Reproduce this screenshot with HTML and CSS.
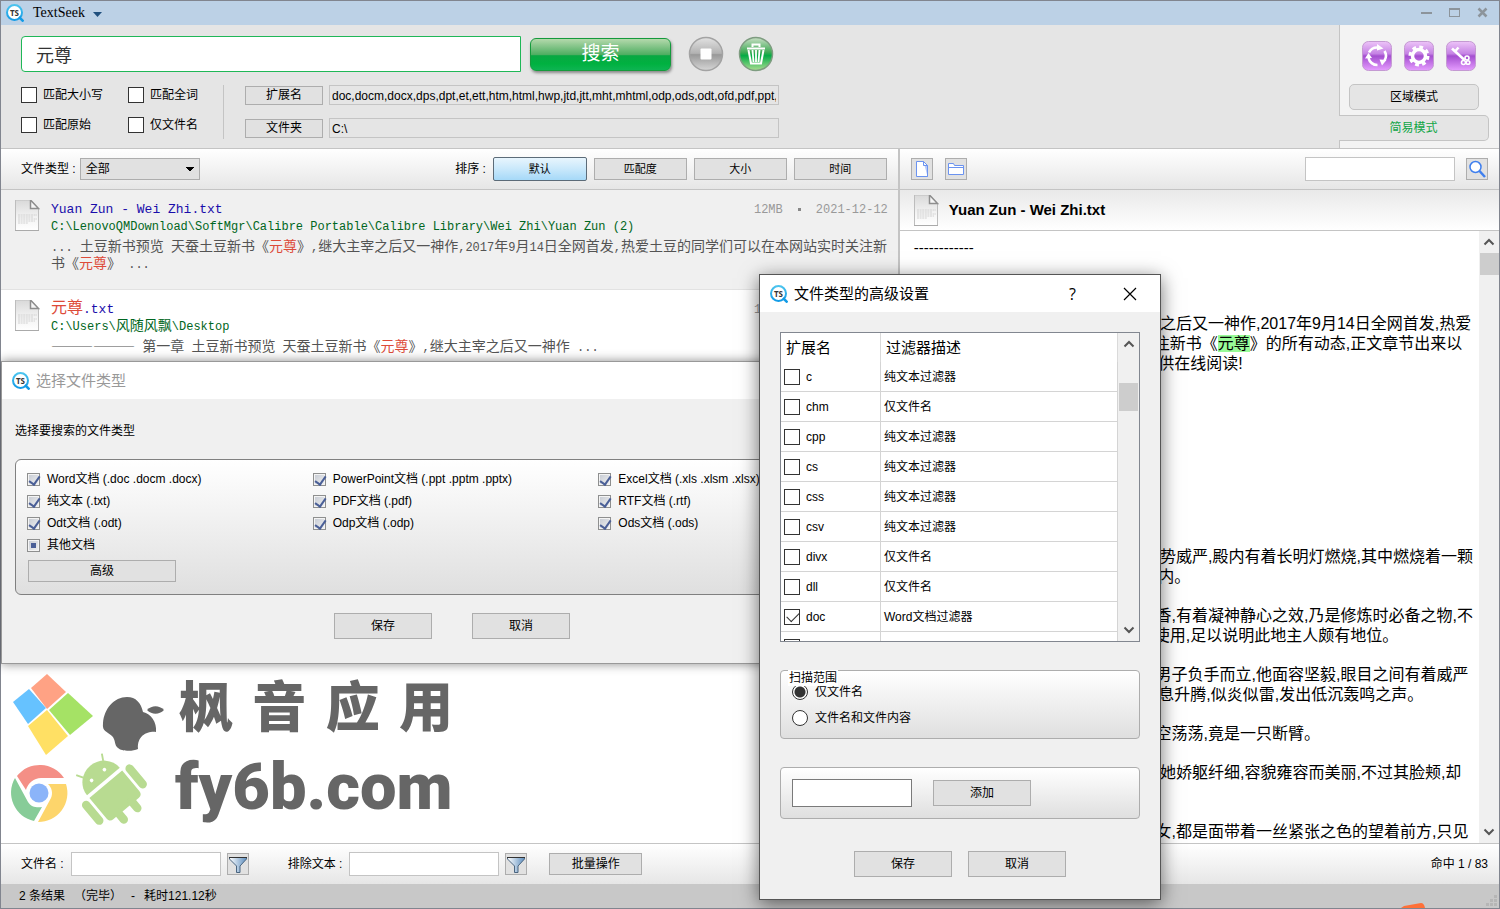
FILE: index.html
```html
<!DOCTYPE html>
<html lang="zh-CN">
<head>
<meta charset="utf-8">
<title>TextSeek</title>
<link rel="stylesheet" href="styles.css">
</head>
<body>
<svg class="defs" aria-hidden="true">
  <defs>
    <linearGradient id="blueRing" x1="0" y1="0" x2="0" y2="1"><stop offset="0" stop-color="#4cc4ee"/><stop offset="1" stop-color="#129be6"/></linearGradient>
    <linearGradient id="violet" x1="0" y1="0" x2="0" y2="1"><stop offset="0" stop-color="#edc4f8"/><stop offset=".42" stop-color="#c583e4"/><stop offset=".5" stop-color="#a44fd0"/><stop offset="1" stop-color="#e69dff"/></linearGradient>
    <linearGradient id="greyBall" x1="0" y1="0" x2="0" y2="1"><stop offset="0" stop-color="#e2e2e2"/><stop offset=".48" stop-color="#b2b2b2"/><stop offset=".52" stop-color="#999"/><stop offset="1" stop-color="#d6d6d6"/></linearGradient>
    <linearGradient id="greenBall" x1="0" y1="0" x2="0" y2="1"><stop offset="0" stop-color="#c9dfc5"/><stop offset=".45" stop-color="#3faa55"/><stop offset=".55" stop-color="#05ab45"/><stop offset="1" stop-color="#aade92"/></linearGradient>
    <linearGradient id="page" x1="0" y1="0" x2="0" y2="1"><stop offset="0" stop-color="#d9d9d9"/><stop offset=".6" stop-color="#f4f4f4"/><stop offset="1" stop-color="#fff"/></linearGradient>
    <linearGradient id="funnel" x1="0" y1="0" x2="1" y2="0"><stop offset="0" stop-color="#fff"/><stop offset="1" stop-color="#5e8fc0"/></linearGradient>
    <symbol id="ts" viewBox="0 0 18 18">
      <circle cx="8.5" cy="8.5" r="7.5" fill="#fff" stroke="url(#blueRing)" stroke-width="2"/>
      <path d="M13 13l4.500 4.500" stroke="#129be6" stroke-width="2.500"/>
      <text x="8.500" y="11.500" text-anchor="middle" class="ts-text">TS</text>
    </symbol>
    <symbol id="file" viewBox="0 0 25 31">
      <path d="M.5 0h15l8 8.500v22H.5z" fill="url(#page)" stroke="#bdbdbd"/>
      <path d="M15.500 0v8.500h8z" fill="#f6f6f6" stroke="#8e8e8e" stroke-width="1.500"/>
      <path d="M3 15h19M3 17h15M3 19h19M3 21h17M3 23h10" stroke="#d2d2d2" stroke-dasharray="2 .6"/>
      <path d="M0 30.500h24" stroke="#aaa"/>
    </symbol>
    <symbol id="filter" viewBox="0 0 20 20">
      <path d="M1.500 3.500h17v1.500l-6.500 7v6.500H8.500V12l-7-7z" fill="url(#funnel)" stroke="#4a6580"/>
      <path d="M1 3.500h18" stroke="#333"/>
    </symbol>
    <symbol id="up" viewBox="0 0 12 8"><path d="M1.500 6.500L6 2l4.500 4.500" fill="none" stroke="#555" stroke-width="2"/></symbol>
    <symbol id="down" viewBox="0 0 12 8"><path d="M1.500 1.500L6 6l4.500-4.500" fill="none" stroke="#555" stroke-width="2"/></symbol>
  </defs>
</svg>

<div class="window">
  <header class="titlebar">
    <svg class="app-icon"><use href="#ts"/></svg>
    <span class="app-name">TextSeek</span>
    <svg class="caret" viewBox="0 0 9 5"><path d="M0 0h9L4.500 5z" fill="#1f4f7d"/></svg>
    <div class="win-buttons">
      <button class="bare" aria-label="最小化"><svg width="12" height="12" viewBox="0 0 12 12"><path d="M0 6h11" stroke="#8c949b" stroke-width="2"/></svg></button>
      <button class="bare" aria-label="最大化"><svg width="12" height="12" viewBox="0 0 12 12"><rect x=".5" y="1.500" width="10" height="8" fill="none" stroke="#8c949b"/><path d="M0 2h11" stroke="#8c949b" stroke-width="2"/></svg></button>
      <button class="bare" aria-label="关闭"><svg width="12" height="12" viewBox="0 0 12 12"><path d="M1.500 1.500l8 8M9.500 1.500l-8 8" stroke="#8c949b" stroke-width="2.500"/></svg></button>
    </div>
  </header>

  <section class="head">
    <div class="head-main">
      <div class="search-row">
        <input class="query" type="text" value="元尊" aria-label="搜索内容">
        <button class="search-btn">搜索</button>
        <button class="bare ball" aria-label="停止"><svg width="36" height="36" viewBox="0 0 36 36"><circle cx="18" cy="18" r="16.500" fill="url(#greyBall)" stroke="#a3a3a3" stroke-width="1.500"/><rect x="12.500" y="12.500" width="11" height="11" rx="1" fill="#fff"/></svg></button>
        <button class="bare ball" aria-label="清空"><svg width="36" height="36" viewBox="0 0 36 36"><circle cx="18" cy="18" r="16.500" fill="url(#greenBall)" stroke="#7e9c80" stroke-width="1.500"/><path d="M9 12.500h18M14.500 11V8.500h7V11" fill="none" stroke="#fff" stroke-width="2"/><path d="M10.500 14l2.500 13.500h10L25.500 14" fill="none" stroke="#fff" stroke-width="2"/><path d="M14.500 14l1 12M18 14v12M21.500 14l-1 12" stroke="#fff" stroke-width="1.800"/></svg></button>
      </div>
      <div class="options">
        <div class="checks">
          <label><input type="checkbox" class="box">匹配大小写</label>
          <label><input type="checkbox" class="box">匹配全词</label>
          <label><input type="checkbox" class="box">匹配原始</label>
          <label><input type="checkbox" class="box">仅文件名</label>
        </div>
        <div class="scope">
          <button class="btn scope-btn">扩展名</button>
          <input class="scope-field" type="text" aria-label="扩展名" value="doc,docm,docx,dps,dpt,et,ett,htm,html,hwp,jtd,jtt,mht,mhtml,odp,ods,odt,ofd,pdf,ppt,pptm,pptx">
          <button class="btn scope-btn">文件夹</button>
          <input class="scope-field" type="text" aria-label="文件夹" value="C:\">
        </div>
      </div>
    </div>
    <aside class="modes">
      <div class="mode-icons">
        <button class="bare" aria-label="刷新"><svg width="30" height="30" viewBox="0 0 30 30"><rect x=".5" y=".5" width="29" height="29" rx="6" fill="url(#violet)" stroke="#c49ad2"/><g fill="none" stroke="#fff" stroke-width="2.600"><path d="M7 11.500A9 9 0 0 1 15.500 6.500"/><path d="M22.500 10A9 9 0 0 1 22.500 19.500"/><path d="M15.500 24A9 9 0 0 1 6.500 17"/></g><path d="M15 3l6.500 4.500L15 9.500zM17.500 18.500l7 .5-4.500 5.500zM3 17.500l3.500-5.500 3.500 5z" fill="#fff"/></svg></button>
        <button class="bare" aria-label="设置"><svg width="30" height="30" viewBox="0 0 30 30"><rect x=".5" y=".5" width="29" height="29" rx="6" fill="url(#violet)" stroke="#c49ad2"/><circle cx="15" cy="15" r="6.500" fill="none" stroke="#fff" stroke-width="3.500"/><circle cx="15" cy="15" r="9" fill="none" stroke="#fff" stroke-width="3" stroke-dasharray="3.800 3.270"/></svg></button>
        <button class="bare" aria-label="密钥"><svg width="30" height="30" viewBox="0 0 30 30"><rect x=".5" y=".5" width="29" height="29" rx="6" fill="url(#violet)" stroke="#c49ad2"/><path d="M6 7.500L18.500 19" stroke="#fff" stroke-width="2.600"/><path d="M8.500 11l4-4.500" stroke="#fff" stroke-width="2.500"/><g fill="none" stroke="#fff" stroke-width="1.600"><circle cx="21" cy="17" r="2"/><circle cx="17.500" cy="21.500" r="2"/><circle cx="22" cy="21.500" r="1.800"/></g></svg></button>
      </div>
      <button class="mode-btn">区域模式</button>
      <button class="mode-btn mode-active">简易模式</button>
    </aside>
  </section>

  <main class="panes">
    <section class="pane left">
      <div class="bar">
        <label for="ftype">文件类型 :</label>
        <select id="ftype" class="type-select"><option>全部</option></select>
        <div class="sort">
          <span class="sort-label">排序 :</span>
          <button class="btn sort-btn sort-on">默认</button>
          <button class="btn sort-btn">匹配度</button>
          <button class="btn sort-btn">大小</button>
          <button class="btn sort-btn">时间</button>
        </div>
      </div>
      <div class="list">
        <article class="hit hit-on">
          <svg class="file-icon"><use href="#file"/></svg>
          <div class="hit-body">
            <div class="hit-top"><a class="hit-name" href="#r1">Yuan Zun - Wei Zhi.txt</a><div class="meta"><span>12MB</span><i class="dot"></i><span>2021-12-12</span></div></div>
            <div class="path">C:\LenovoQMDownload\SoftMgr\Calibre Portable\Calibre Library\Wei Zhi\Yuan Zun (2)</div>
            <p class="snippet"><small>... </small>土豆新书预览<small> </small>天蚕土豆新书《<em>元尊</em>》<small>,</small>继大主宰之后又一神作<small>,2017</small>年<small>9</small>月<small>14</small>日全网首发<small>,</small>热爱土豆的同学们可以在本网站实时关注新<br>书《<em>元尊</em>》<small> ...</small></p>
          </div>
        </article>
        <article class="hit">
          <svg class="file-icon"><use href="#file"/></svg>
          <div class="hit-body">
            <div class="hit-top"><a class="hit-name" href="#r2"><em>元尊</em>.txt</a><div class="meta"><span>12MB</span><i class="dot"></i><span>2021-12-12</span></div></div>
            <div class="path">C:\Users\<span class="cjk">风随风飘</span>\Desktop</div>
            <p class="snippet">——————<small> </small>第一章<small> </small>土豆新书预览<small> </small>天蚕土豆新书《<em>元尊</em>》<small>,</small>继大主宰之后又一神作<small> ...</small></p>
          </div>
        </article>
        <div class="brand">
          <svg class="brand-art" width="155" height="153" viewBox="10 672 155 153" aria-hidden="true">
            <path d="M47 673l19 18-19 17-16-21z" fill="#ffa284"/><path d="M29 688l17 19-18 16-15-22z" fill="#66c2ff"/><path d="M68 692l25 23-23 19-21-25z" fill="#a5e265"/><path d="M47 709l21 26-22 19-18-29z" fill="#ffe064"/>
            <path d="M103 722c1-14 11-26 24-26 9 0 14 6 16 15 8 2 14 10 13 20-8-1-19 3-18 17-6 3-17 2-20-1-4-3-2-8-6-12-5-5-10-4-9-13z" fill="#666"/><path d="M147 709c5-5 12-5 17 0-5 5-12 5-17 0z" fill="#666"/>
            <path d="M17 775a29 29 0 0 1 47 2H41a16 16 0 0 0-15 12z" fill="#f48f86"/><path d="M15 777l13 24c3 5 9 6 14 5l-8 14a29 29 0 0 1-19-43z" fill="#87cc98"/><path d="M48 783h18a29 29 0 0 1-28 38l13-24c2-5 1-10-3-14z" fill="#fdd56b"/><circle cx="39" cy="792" r="9.500" fill="#8bb4f9"/>
            <g fill="#b8db91" transform="translate(7 55) scale(.93) rotate(-40 112 790)"><path d="M89 777a23 22 0 0 1 46 0z"/><path d="M89 781h46v29c0 3-2 5-5 5H94c-3 0-5-2-5-5z"/><rect x="77" y="780" width="9" height="31" rx="4.500"/><rect x="138" y="780" width="9" height="31" rx="4.500"/><rect x="98" y="808" width="9" height="19" rx="4.500"/><rect x="117" y="808" width="9" height="19" rx="4.500"/><path d="M98 760l-4-7M126 760l4-7" stroke="#b8db91" stroke-width="2"/><circle cx="103" cy="768" r="2" fill="#fff"/><circle cx="121" cy="768" r="2" fill="#fff"/></g>
          </svg>
          <div class="brand-text">
            <div class="brand-cn"><span>枫</span><span>音</span><span>应</span><span>用</span></div>
            <div class="brand-en">fy6b.com</div>
          </div>
        </div>
      </div>
      <div class="bar bar-bottom">
        <label for="fname">文件名 :</label>
        <input id="fname" class="field" type="text">
        <button class="btn icon-btn" aria-label="筛选文件名"><svg width="20" height="20"><use href="#filter"/></svg></button>
        <label class="exclude" for="fex">排除文本 :</label>
        <input id="fex" class="field" type="text">
        <button class="btn icon-btn" aria-label="筛选文本"><svg width="20" height="20"><use href="#filter"/></svg></button>
        <button class="btn batch">批量操作</button>
      </div>
    </section>

    <section class="pane right">
      <div class="bar bar-right">
        <button class="btn icon-btn" aria-label="打开文件"><svg width="16" height="18" viewBox="0 0 16 18"><path d="M2.500 1.500h7l4 4v11h-11z" fill="#fff" stroke="#6b93f0"/><path d="M9.500 1.500v4h4v11" fill="#b8caf8" stroke="#6b93f0"/></svg></button>
        <button class="btn icon-btn open-dir" aria-label="打开文件夹"><svg width="18" height="16" viewBox="0 0 18 16"><path d="M1.500 13.500v-11h5l1 2h9v9z" fill="#fff" stroke="#6b93f0"/><path d="M1.500 6.500h15" stroke="#6b93f0"/></svg></button>
        <input class="field find" type="text" aria-label="查找">
        <button class="btn icon-btn" aria-label="查找"><svg width="20" height="20" viewBox="0 0 20 20"><circle cx="8.500" cy="8" r="5.500" fill="#fff" stroke="#3f7fee" stroke-width="1.500"/><path d="M12.500 12l5.500 6" stroke="#3f7fee" stroke-width="2.500"/></svg></button>
      </div>
      <div class="doc-head"><svg class="file-icon"><use href="#file"/></svg><h1>Yuan Zun - Wei Zhi.txt</h1></div>
      <div class="reader">
        <div class="reader-text">
          <p class="rule">------------</p>
          <p class="intro">    天蚕土豆新书《元尊》,继大主宰之后又一神作,2017年9月14日全网首发,热爱
土豆的同学们可以在本网站实时关注新书《<mark>元尊</mark>》的所有动态,正文章节出来以
后本站将会在第一时间更新,免费提供在线阅读!</p>
          <p>    黄金色的宫殿之中灯火通明着,气势威严,殿内有着长明灯燃烧,其中燃烧着一颗
颗青色的圆珠异香缓缓升腾,萦绕殿内。</p>
          <p>    此珠名为青檀燃烧之时会放出异香,有着凝神静心之效,乃是修炼时必备之物,不
过价格极为昂贵能将它当作灯火来使用,足以说明此地主人颇有地位。</p>
          <p>    大殿中央处一名身披黄袍的中年男子负手而立,他面容坚毅,眼目之间有着威严
之色,周身源气涌动隐约之间有着气息升腾,似炎似雷,发出低沉轰鸣之声。</p>
          <p>    不过他那右侧的衣袖处却是一片空荡荡,竟是一只断臂。</p>
          <p>    在那男子身旁有一位宫装美妇人,她娇躯纤细,容貌雍容而美丽,不过其脸颊,却
是有些苍白。</p>
          <p>    在他们后方还有着不少的人影男女,都是面带着一丝紧张之色的望着前方,只见</p>
        </div>
        <div class="scroll" aria-hidden="true"><svg width="12" height="8"><use href="#up"/></svg><div class="thumb"></div><svg width="12" height="8"><use href="#down"/></svg></div>
      </div>
      <div class="bar bar-bottom bar-count">命中 1 / 83</div>
    </section>
  </main>

  <footer class="status"><span>2 条结果</span><span>（完毕）</span><span>-</span><span>耗时121.12秒</span>
    <svg class="peek" width="24" height="5" viewBox="0 0 24 5" aria-hidden="true"><path d="M0 5l3-2 17-3q3 0 4 5z" fill="#ff7038"/></svg>
    <svg class="grip" width="11" height="11" viewBox="0 0 11 11" aria-hidden="true"><path d="M8 0h3v3H8zM8 4h3v3H8zM8 8h3v3H8zM4 4h3v3H4zM4 8h3v3H4zM0 8h3v3H0z" fill="#b6b6b6"/></svg>
  </footer>
</div>

<section class="dialog types" role="dialog" aria-labelledby="d1">
  <header class="dlg-title"><svg class="app-icon"><use href="#ts"/></svg><h2 id="d1">选择文件类型</h2></header>
  <div class="types-body">
    <p class="hint">选择要搜索的文件类型</p>
    <div class="group types-group">
      <div class="types-grid">
        <label><input type="checkbox" class="tick" checked>Word文档 (.doc .docm .docx)</label>
        <label><input type="checkbox" class="tick" checked>PowerPoint文档 (.ppt .pptm .pptx)</label>
        <label><input type="checkbox" class="tick" checked>Excel文档 (.xls .xlsm .xlsx)</label>
        <label><input type="checkbox" class="tick" checked>纯文本 (.txt)</label>
        <label><input type="checkbox" class="tick" checked>PDF文档 (.pdf)</label>
        <label><input type="checkbox" class="tick" checked>RTF文档 (.rtf)</label>
        <label><input type="checkbox" class="tick" checked>Odt文档 (.odt)</label>
        <label><input type="checkbox" class="tick" checked>Odp文档 (.odp)</label>
        <label><input type="checkbox" class="tick" checked>Ods文档 (.ods)</label>
        <label><input type="checkbox" class="tick partial">其他文档</label>
      </div>
      <button class="btn advanced">高级</button>
    </div>
    <div class="actions actions-wide"><button class="btn act">保存</button><button class="btn act">取消</button></div>
  </div>
</section>

<section class="dialog adv" role="dialog" aria-labelledby="d2">
  <header class="dlg-title"><svg class="app-icon"><use href="#ts"/></svg><h2 id="d2">文件类型的高级设置</h2>
    <button class="bare help" aria-label="帮助">?</button>
    <button class="bare" aria-label="关闭"><svg width="14" height="14" viewBox="0 0 14 14"><path d="M1 1l12 12M13 1L1 13" stroke="#000" stroke-width="1.200"/></svg></button>
  </header>
  <div class="adv-body">
    <div class="table-box">
      <table>
        <thead><tr><th>扩展名</th><th>过滤器描述</th></tr></thead>
        <tbody>
          <tr><td><label><input type="checkbox" class="box">c</label></td><td>纯文本过滤器</td></tr>
          <tr><td><label><input type="checkbox" class="box">chm</label></td><td>仅文件名</td></tr>
          <tr><td><label><input type="checkbox" class="box">cpp</label></td><td>纯文本过滤器</td></tr>
          <tr><td><label><input type="checkbox" class="box">cs</label></td><td>纯文本过滤器</td></tr>
          <tr><td><label><input type="checkbox" class="box">css</label></td><td>纯文本过滤器</td></tr>
          <tr><td><label><input type="checkbox" class="box">csv</label></td><td>纯文本过滤器</td></tr>
          <tr><td><label><input type="checkbox" class="box">divx</label></td><td>仅文件名</td></tr>
          <tr><td><label><input type="checkbox" class="box">dll</label></td><td>仅文件名</td></tr>
          <tr><td><label><input type="checkbox" class="box" checked>doc</label></td><td>Word文档过滤器</td></tr>
          <tr><td><label><input type="checkbox" class="box" aria-label="docm"></label></td><td></td></tr>
        </tbody>
      </table>
      <div class="scroll scroll-mid" aria-hidden="true"><svg width="12" height="8"><use href="#up"/></svg><div class="thumb"></div><svg width="12" height="8"><use href="#down"/></svg></div>
    </div>
    <div class="group range" role="radiogroup" aria-labelledby="rg">
      <span id="rg" class="legend">扫描范围</span>
      <label><input type="radio" name="range" checked>仅文件名</label>
      <label><input type="radio" name="range">文件名和文件内容</label>
    </div>
    <div class="group adder"><input class="add-field" type="text" aria-label="新扩展名"><button class="btn act">添加</button></div>
    <div class="actions"><button class="btn act">保存</button><button class="btn act">取消</button></div>
  </div>
</section>
</body>
</html>
```

FILE: styles.css
```css
* { box-sizing: border-box; }

body {
  margin: 0;
  font: 12px/16px "Liberation Sans", "Noto Sans CJK SC", sans-serif;
  color: #000;
  overflow: hidden;
}

h1, h2, p { margin: 0; font-weight: normal; }
button, input, select { font: inherit; color: inherit; margin: 0; }
input[type="text"] { min-width: 0; }
label { display: flex; align-items: center; white-space: nowrap; }
svg { display: block; flex: none; }
.defs { position: absolute; width: 0; height: 0; }

.bare { border: 0; padding: 0; background: none; display: flex; }
.btn {
  border: 1px solid #adadad;
  background: #e1e1e1;
  padding: 0;
  display: flex;
  align-items: center;
  justify-content: center;
}
.ts-text { font: bold 8px "Open Sans", sans-serif; fill: #333; }
.app-icon { width: 18px; height: 18px; }

/* window frame */
.window {
  height: 100vh;
  display: flex;
  flex-direction: column;
  border: 1px solid #81858f;
  background: #fff;
}
.titlebar {
  height: 24px;
  flex: none;
  display: flex;
  align-items: center;
  padding: 0 10px 0 5px;
  background: #bcd1e6;
}
.app-name { margin-left: 9px; font: 14px/16px "Liberation Serif", serif; }
.caret { width: 9px; height: 5px; margin: 3px 0 0 8px; }
.win-buttons { display: flex; gap: 16px; margin-left: auto; }

/* search header */
.head {
  height: 124px;
  flex: none;
  display: flex;
  background: #e5e5e5;
  border-bottom: 1px solid #c4c4c4;
}
.head-main { flex: 1; padding: 11px 20px 0; }
.search-row { display: flex; align-items: center; height: 36px; }
.query {
  width: 500px;
  height: 36px;
  padding: 0 14px;
  border: 1px solid #1fb757;
  border-radius: 4px 0 0 4px;
  background: #fff;
  color: #333;
  font-size: 18px;
}
.search-btn {
  width: 141px;
  height: 33px;
  margin: 0 17px 0 9px;
  border: 1px solid #159a3c;
  border-radius: 6px;
  background: linear-gradient(#b4d9ac, #4fae62 50%, #08a842 54%, #00b140 80%, #0db452);
  box-shadow: 1px 2px 3px #888;
  color: #fff;
  font-size: 19px;
  line-height: 24px;
}
.ball { margin-right: 14px; }
.options { display: flex; margin-top: 13px; height: 54px; }
.checks {
  display: grid;
  grid-template-columns: 107px 95px;
  grid-template-rows: 20px 20px;
  row-gap: 10px;
  border-right: 1px solid #c4c4c4;
}
.checks label { gap: 6px; }
.box {
  appearance: none;
  width: 16px;
  height: 16px;
  flex: none;
  border: 1px solid #333;
  background: #fff;
}
.box:checked::before {
  content: "";
  display: block;
  width: 11px;
  height: 6px;
  margin: 2px 0 0 2px;
  border: solid #333;
  border-width: 0 0 1px 1px;
  transform: rotate(-45deg);
}
.scope {
  display: grid;
  grid-template-columns: 78px 450px;
  grid-template-rows: 20px 20px;
  gap: 13px 6px;
  align-items: center;
  margin-left: 21px;
}
.scope-btn { height: 19px; }
.scope-field {
  height: 20px;
  padding: 2px 2px 0;
  border: 1px solid #c4c4c4;
  background: transparent;
}

.modes {
  width: 160px;
  padding-top: 16px;
  border-left: 1px solid #c4c4c4;
  background: #f3f3f3;
}
.mode-icons { display: flex; gap: 12px; margin: 0 0 13px 22px; }
.mode-btn {
  display: block;
  width: 130px;
  height: 26px;
  margin-left: 9px;
  padding: 0;
  border: 1px solid #c4c4c4;
  border-radius: 5px;
  background: #e5e5e5;
}
.mode-active {
  width: 150px;
  margin: 5px 0 0 -1px;
  border-left: 0;
  border-radius: 0 5px 5px 0;
  color: #10a545;
}

/* two panes */
.panes { flex: 1; min-height: 0; display: grid; grid-template-columns: 3fr 2fr; grid-template-rows: minmax(0, 1fr); }
.pane { display: flex; flex-direction: column; min-width: 0; }
.left { border-right: 2px solid #c4c4c4; }
.bar {
  height: 41px;
  flex: none;
  display: flex;
  align-items: center;
  padding: 0 11px 0 20px;
  border-bottom: 1px solid #c4c4c4;
  background: linear-gradient(#fff, #e6e6e6);
}
.bar-bottom { border-top: 1px solid #c4c4c4; border-bottom: 0; }
.bar label { flex: none; }
.type-select {
  appearance: none;
  width: 120px;
  height: 22px;
  margin-left: 4px;
  padding: 0 5px;
  border: 1px solid #adadad;
  border-radius: 0;
  background-color: #e1e1e1;
  background-image: linear-gradient(to top right, transparent 48%, #000 50%), linear-gradient(to top left, transparent 48%, #000 50%);
  background-repeat: no-repeat;
  background-position: 105px 8px, 109px 8px;
  background-size: 4px 4px, 4px 4px;
}
.sort { display: flex; align-items: center; gap: 7px; margin-left: auto; }
.sort-btn { width: 93px; height: 22px; font-size: 11px; }
.sort-on {
  width: 94px;
  height: 24px;
  border-color: #5c6b78;
  border-radius: 2px;
  background: linear-gradient(#e8f5fd, #c9e8fb 50%, #a6d9f8);
}
.icon-btn { width: 22px; height: 22px; flex: none; }
.field { width: 150px; height: 24px; border: 1px solid #c4c4c4; background: #fff; }
.bar .field { margin: 0 6px 0 7px; }
.exclude { margin-left: 39px; }
.batch { width: 93px; height: 22px; margin-left: 22px; }

/* result list */
.list { flex: 1; min-height: 0; overflow: hidden; display: flex; flex-direction: column; }
.hit {
  min-height: 100px;
  display: flex;
  gap: 11px;
  padding: 10px 10px 0 14px;
  border-bottom: 1px solid #e2e2e2;
}
.hit-on { background: #f0f0f0; }
.file-icon { width: 25px; height: 31px; }
.hit-body { flex: 1; min-width: 0; font-family: "Liberation Mono", "Noto Sans CJK SC", monospace; }
.hit-top { display: flex; justify-content: space-between; height: 19px; align-items: center; }
.hit-name { color: #1a0dab; text-decoration: none; font: 13px/18px "Liberation Mono", "Noto Sans CJK SC", monospace; }
.hit-name em { font-size: 16px; }
.meta { display: flex; align-items: center; gap: 15px; color: #999; }
.dot { width: 3px; height: 3px; background: #888; }
.path { color: #006621; line-height: 16px; }
.cjk { font-size: 14px; line-height: 14px; }
.snippet { margin-top: 2px; font: 14px/16px "Noto Sans CJK SC", sans-serif; color: #545454; white-space: nowrap; }
.snippet small { font: 12px/12px "Liberation Mono", monospace; white-space: pre; }
em { color: #dd4b39; font-style: normal; }

/* brand picture at the foot of the list */
.brand { display: flex; gap: 10px; margin-top: auto; padding: 0 0 17px 9px; color: #666; }
.brand-text { width: 278px; }
.brand-cn { display: flex; justify-content: space-between; padding-left: 4px; font: 900 54px/62px "Noto Sans CJK SC", sans-serif; }
.brand-en { font: 900 65px/72px Roboto, "Liberation Sans", sans-serif; margin-top: 16px; }

/* reader */
.bar-right { padding-left: 11px; }
.open-dir { margin-left: 12px; }
.bar .find { margin: 0 11px 0 auto; }
.doc-head {
  height: 41px;
  flex: none;
  display: flex;
  align-items: center;
  gap: 10px;
  padding-left: 14px;
  border-bottom: 1px solid #c4c4c4;
  background: linear-gradient(#e9e9e9, #fff);
}
.doc-head h1 { font: bold 15px/16px "Liberation Sans", sans-serif; }
.reader { flex: 1; min-height: 0; display: flex; overflow: hidden; }
.reader-text { flex: 1; min-width: 0; padding: 7px 0 0 14px; font-size: 16px; line-height: 20px; overflow: hidden; }
.reader-text p { white-space: pre; margin-bottom: 19px; }
.reader-text .rule { margin-bottom: 56px; font-size: 15px; }
.reader-text .intro { margin-bottom: 173px; }
mark { background: #98fb98; color: #000; }
.scroll {
  width: 20px;
  min-height: 0;
  flex: none;
  display: flex;
  flex-direction: column;
  align-items: center;
  padding: 7px 0;
  background: #f0f0f0;
}
.scroll svg:last-child { margin-top: auto; }
.thumb { width: 19px; height: 22px; margin-top: 7px; background: #cdcdcd; }
.bar-count { justify-content: flex-end; }

.status {
  height: 24px;
  flex: none;
  display: flex;
  align-items: center;
  gap: 9px;
  padding: 0 2px 0 18px;
  background: #c8c8c8;
  position: relative;
}
.peek { position: absolute; right: 74px; bottom: 0; }
.grip { margin: 8px 0 0 auto; }

/* dialogs */
.dialog { position: absolute; background: #f0f0f0; border: 1px solid #999; }
.dlg-title { display: flex; align-items: center; height: 37px; padding: 0 23px 0 10px; background: #fff; }
.dlg-title h2 { margin-left: 6px; font-size: 15px; line-height: 20px; }
.group { border: 1px solid #adadad; border-radius: 4px; background: linear-gradient(#fff, #dfdfdf); }
.actions { display: flex; justify-content: center; gap: 16px; }
.act { width: 98px; height: 26px; }

.types { left: 1px; top: 361px; width: 902px; box-shadow: 0 0 10px rgba(0, 0, 0, .45); }
.types .dlg-title h2 { color: #999; }
.types-body { padding: 24px 13px; }
.types-group { margin: 20px 0 18px; padding: 8px 4px 12px 11px; border-color: #808080; border-radius: 6px; }
.types-grid { display: grid; grid-template-columns: repeat(3, 1fr); grid-auto-rows: 22px; }
.types-grid label { gap: 7px; }
.tick {
  appearance: none;
  width: 13px;
  height: 13px;
  flex: none;
  border: 1px solid #8e8f8f;
  box-shadow: inset 0 0 0 1px #f4f4f4;
  background: linear-gradient(135deg, #c4c9d2, #f2f2f2);
}
.tick:checked::before {
  content: "";
  display: block;
  width: 5px;
  height: 9px;
  margin: 0 0 0 3px;
  border: solid #4a5f97;
  border-width: 0 2px 2px 0;
  transform: rotate(35deg);
}
.partial::before { content: ""; display: block; width: 5px; height: 5px; margin: 3px; background: #4a5f97; }
.advanced { width: 148px; height: 22px; margin: 4px 0 0 1px; }
.actions-wide { gap: 40px; }

.adv { left: 759px; top: 274px; width: 402px; border-color: #555; box-shadow: 0 4px 18px rgba(0, 0, 0, .55); }
.help { margin: 0 47px 0 auto; font: 16px/20px "Open Sans", sans-serif; }
.adv-body { padding: 20px 20px 22px; }
.table-box {
  display: flex;
  height: 310px;
  overflow: hidden;
  border: 1px solid #828790;
  background: #fff;
}
table { flex: 1; border-collapse: separate; border-spacing: 0; table-layout: fixed; height: 329px; }
th { height: 29px; padding: 0 5px; border-right: 1px solid #dadada; font-size: 15px; font-weight: normal; text-align: left; }
th:first-child { width: 100px; }
td { height: 30px; padding: 0 3px; border-right: 1px solid #d4d4d4; border-bottom: 1px solid #d4d4d4; }
td label { gap: 6px; }
.scroll-mid { width: 21px; }
.scroll-mid .thumb { height: 28px; margin-top: 35px; }
.range { position: relative; margin: 28px 0; padding: 12px 11px; }
.range label { height: 17px; gap: 7px; }
.range label + label { margin-top: 9px; }
.legend { position: absolute; left: 7px; top: -1px; padding: 0 1px; background: #fff; }
.range input {
  appearance: none;
  width: 16px;
  height: 16px;
  border: 1px solid #333;
  border-radius: 50%;
  background: #fff;
}
.range input:checked { background: radial-gradient(#333 5px, #fff 6px); }
.adder { display: flex; align-items: center; gap: 21px; height: 52px; margin-bottom: 32px; padding-left: 11px; }
.add-field { width: 120px; height: 28px; border: 1px solid #7a7a7a; background: #fff; }
```
